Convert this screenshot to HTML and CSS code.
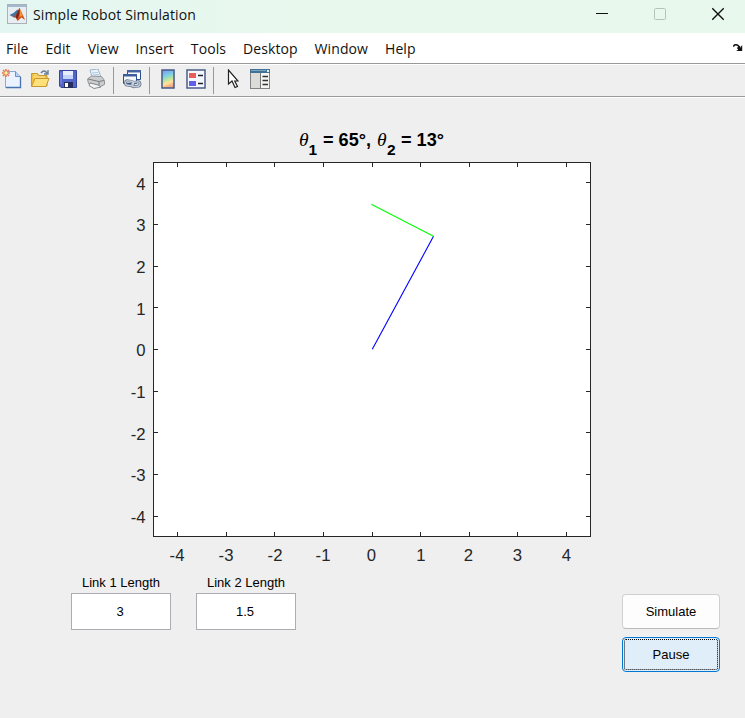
FILE: index.html
```html
<!DOCTYPE html>
<html lang="en">
<head>
<meta charset="utf-8">
<title>Simple Robot Simulation</title>
<link rel="stylesheet" href="styles.css">
</head>
<body>
<header class="titlebar">
  <svg class="app-icon" width="20" height="20" viewBox="0 0 20 20">
    <rect x=".5" y=".5" width="19" height="19" fill="#e8edf1" stroke="#a9b2b8"/>
    <path d="M1 1h18v2H1z" fill="#9fb9cf"/>
    <path d="M2.500 11l4-2 4-3.500 1.500 3-4 5.500-2-1z" fill="#3f76a8"/>
    <path d="M6 13l4-4 2.500-5 2 4 3.500 8-3.500-2.500-4 3.500-2-4z" fill="#cf4d18"/>
    <path d="M12.500 4l.5 5-3 6-1.500-2 2-5z" fill="#74251c"/>
    <path d="M12.800 5l1.500 3 1.200 4-3 1z" fill="#f49531"/>
  </svg>
  <h1 class="window-title">Simple Robot Simulation</h1>
  <div class="window-controls">
    <svg width="12" height="14" viewBox="0 0 12 14"><path d="M0 6.500h12" stroke="#111"/></svg>
    <svg width="12" height="14" viewBox="0 0 12 14"><rect x=".5" y="1.500" width="11" height="11" rx="1" fill="none" stroke="#b5c5ba"/></svg>
    <svg width="12" height="14" viewBox="0 0 12 14"><path d="M.3 1.300l11.400 11.400M11.700 1.300L.3 12.700" stroke="#111" stroke-width="1.250"/></svg>
  </div>
</header>
<nav class="menubar">
  <span>File</span><span>Edit</span><span>View</span><span>Insert</span><span>Tools</span><span>Desktop</span><span>Window</span><span>Help</span>
  <svg class="dock" width="10" height="8" viewBox="0 0 10 8"><path d="M.3 2.600Q2-.3 4.500 1.200L7 3.400" fill="none" stroke="#111" stroke-width="1.500"/><path d="M9.200 1v6H3.200l2-1.600-1.300-1.300 1.700-1.500 1.800 1z" fill="#111"/></svg>
</nav>
<div class="toolbar">
  <svg class="tool new" width="20" height="20" viewBox="0 0 20 20">
    <path d="M3.500 2.500h10l5 5v11h-15z" fill="#eaf3ff" stroke="#8babd2"/>
    <path d="M13.500 2.500v5h5" fill="#b7d2f2" stroke="#6f91c1"/>
    <path d="M18.500 8v10.500H4" fill="none" stroke="#4673b0" stroke-width="1.300"/>
    <path d="M1 1l6 6M7 1L1 7M4 0v8M0 4h8" stroke="#e07a58" stroke-width="1.600"/><circle cx="4" cy="4" r="1.700" fill="#fff09a"/>
  </svg>
  <svg class="tool open" width="20" height="20" viewBox="0 0 20 20">
    <path d="M1.500 17V4.500h6l1.500 2h8V17z" fill="#f3bf3e" stroke="#c59a32"/>
    <path d="M3 8h12M4 6h3" stroke="#ffeb9d"/>
    <path d="M1.500 17.500L5 9.500h14L16 17.500z" fill="#ffe17b" stroke="#c8982c"/>
    <path d="M11 4q3-4 6 0M18 1v4h-4" fill="none" stroke="#657e98" stroke-width="1.400"/>
  </svg>
  <svg class="tool save" width="20" height="20" viewBox="0 0 20 20">
    <path d="M1.500 1.500h17v17H3l-1.500-1.500z" fill="#5365c8" stroke="#33459b"/>
    <path d="M5 2h10v8H5z" fill="#e7eeff"/><path d="M5 6h10v4H5z" fill="#c5d4fa"/>
    <path d="M6 13h9v6H6z" fill="#252d5c"/><path d="M7 14h3v4H7z" fill="#fff"/>
    <path d="M3 3v12" stroke="#8293e7"/>
  </svg>
  <svg class="tool print" width="20" height="20" viewBox="0 0 20 20">
    <path d="M6 8L4 1l8-1 3 8z" fill="#e8f3fc" stroke="#9fb4c6"/>
    <path d="M1.500 10l4-3 10 .5 3 4v4l-4 2-12-3z" fill="#cbcccd" stroke="#929496"/>
    <path d="M2 10l11 2.500 5-1M13 12.500v4" fill="none" stroke="#7b7e80"/>
    <path d="M4 14l8 2 3 2-7 1.500-5-3z" fill="#f5f5f5" stroke="#85888b"/>
    <path d="M6 4l6-.5M7 6l6-.5" stroke="#b0c8db"/>
  </svg>
  <i class="sep s1"></i>
  <svg class="tool link" width="20" height="20" viewBox="0 0 20 20">
    <path d="M5.500 1.500h13v9h-13z" fill="#fff" stroke="#2c508b"/><path d="M5 1h14v2.500H5z" fill="#43669f"/>
    <path d="M1.500 5.500h13v9h-13z" fill="#f4f7fc" stroke="#2c508b"/><path d="M1 5h14v2.500H1z" fill="#3b5d98"/>
    <g fill="none" stroke="#657488" stroke-width="2.800"><rect x="3.500" y="12" width="8" height="4.500" rx="2.250" transform="rotate(8 7.500 14)"/><rect x="10" y="13" width="8" height="4.500" rx="2.250" transform="rotate(-8 14 15)"/></g>
    <g fill="none" stroke="#c3cfdc" stroke-width="1.300"><rect x="3.500" y="12" width="8" height="4.500" rx="2.250" transform="rotate(8 7.500 14)"/><rect x="10" y="13" width="8" height="4.500" rx="2.250" transform="rotate(-8 14 15)"/></g>
  </svg>
  <i class="sep s2"></i>
  <svg class="tool colorbar" width="14" height="20" viewBox="0 0 14 20">
    <defs><linearGradient id="spectrum" x1="0" y1="0" x2=".25" y2="1"><stop stop-color="#8d8bea"/><stop offset=".35" stop-color="#76cce8"/><stop offset=".6" stop-color="#b8e5a0"/><stop offset=".8" stop-color="#ffe29a"/><stop offset="1" stop-color="#f4ab85"/></linearGradient></defs>
    <rect x="1" y="1" width="12" height="18" fill="url(#spectrum)" stroke="#445a86" stroke-width="1.500"/>
  </svg>
  <svg class="tool legend" width="20" height="20" viewBox="0 0 20 20">
    <rect x="1" y="1" width="18" height="18" fill="#f4f7ff" stroke="#4b5d8b" stroke-width="1.500"/>
    <path d="M3 4h7v5H3z" fill="#e85c59"/><path d="M3 12h7v5H3z" fill="#615fe6"/><path d="M12 6.500h5M12 14.500h5" stroke="#222" stroke-width="1.500"/>
  </svg>
  <i class="sep s3"></i>
  <svg class="tool pointer" width="12" height="20" viewBox="0 0 12 20">
    <path d="M1.500 1v14l3.500-3 3 6.500 2.500-1L7.700 12H11z" fill="#fff" stroke="#222" stroke-width="1.200"/>
  </svg>
  <svg class="tool inspector" width="20" height="20" viewBox="0 0 20 20">
    <rect x=".5" y=".5" width="19" height="19" fill="#dcdcd9" stroke="#808487"/>
    <path d="M0 0h20v4H0z" fill="#427194"/><path d="M1 1h15v1H1z" fill="#79a6c2"/><path d="M17 1h2v2h-2z" fill="#e4f1fa"/>
    <path d="M11 4h8v15h-8z" fill="#f5f5f2"/><path d="M10.500 4v15.500" stroke="#777"/><path d="M12.500 7.500H18M12.500 11.500H18M12.500 15.500H18" stroke="#333" stroke-width="1.300"/>
  </svg>
</div>
<main class="figure">
  <svg class="plot" width="745" height="470" viewBox="0 98 745 470">
    <g class="plot-title">
      <text class="theta" x="299" y="146">θ</text><text class="sub" x="308.500" y="155">1</text><text x="323" y="146">= 65°,</text>
      <text class="theta" x="377" y="146">θ</text><text class="sub" x="387" y="155">2</text><text x="401" y="146">= 13°</text>
    </g>
    <rect class="axes" x="153.500" y="162.500" width="437" height="374"/>
    <path class="ticks" d="M177.500 163v4m49-4v4m48-4v4m49-4v4m49-4v4m48-4v4m49-4v4m48-4v4m49-4v4M177.500 536v-4m49 4v-4m48 4v-4m49 4v-4m49 4v-4m48 4v-4m49 4v-4m48 4v-4m49 4v-4M154 182.500h4m-4 42h4m-4 42h4m-4 41h4m-4 42h4m-4 42h4m-4 41h4m-4 42h4m-4 42h4M590 182.500h-4m4 42h-4m4 42h-4m4 41h-4m4 42h-4m4 42h-4m4 41h-4m4 42h-4m4 42h-4"/>
    <g class="labels-y">
      <text x="145.500" y="189.500">4</text><text x="145.500" y="231">3</text><text x="145.500" y="273">2</text><text x="145.500" y="314.500">1</text><text x="145.500" y="356">0</text><text x="145.500" y="397.500">-1</text><text x="145.500" y="439.500">-2</text><text x="145.500" y="481">-3</text><text x="145.500" y="522.500">-4</text>
    </g>
    <g class="labels-x">
      <text x="177" y="561">-4</text><text x="226" y="561">-3</text><text x="275" y="561">-2</text><text x="323" y="561">-1</text><text x="371.500" y="561">0</text><text x="421" y="561">1</text><text x="468.500" y="561">2</text><text x="517.500" y="561">3</text><text x="566.500" y="561">4</text>
    </g>
    <path class="link1" d="M372.300 349.300L433.500 236.300"/>
    <path class="link2" d="M371.300 204.200L433.500 236.200"/>
  </svg>
  <div class="controls">
    <label class="field">Link 1 Length<input type="text" value="3"></label>
    <label class="field">Link 2 Length<input type="text" value="1.5"></label>
    <div class="buttons">
      <button type="button">Simulate</button>
      <button type="button" class="active">Pause</button>
    </div>
  </div>
</main>
</body>
</html>
```
FILE: styles.css
```css
* { box-sizing: border-box; }
body {
  margin: 0;
  width: 745px;
  height: 718px;
  overflow: hidden;
  background: #efefef;
  color: #111;
  font-family: "Open Sans", "Noto Sans", sans-serif;
}
svg { display: block; flex: none; }
.titlebar {
  display: flex;
  height: 33px;
  padding: 4px 21px 0 7px;
  background: linear-gradient(90deg, #e3f6f1, #e8f8ed 40%);
}
.window-title {
  margin: 0 0 0 6px;
  font-size: 14px;
  font-weight: 400;
  line-height: 22px;
  letter-spacing: 0.13px;
}
.window-controls {
  display: flex;
  gap: 46px;
  margin: 3px 0 0 auto;
}
.window-controls svg:first-child { margin-right: 0; }
.menubar {
  display: flex;
  gap: 17px;
  height: 32px;
  padding: 0 2px 0 6px;
  background: #fff;
  border-bottom: 1px solid #fff;
  box-shadow: inset 0 -1px #999;
  font-size: 14px;
  letter-spacing: 0.08px;
  line-height: 31px;
}
.dock { margin: 11px 0 0 auto; }
.toolbar {
  display: flex;
  height: 33px;
  padding: 4px 0 0 2px;
  border-bottom: 1px solid #fff;
  box-shadow: inset 0 -1px #999;
}
.open { margin-left: 8px; }
.save { margin-left: 8px; }
.print { margin-left: 8px; }
.sep { width: 1px; height: 27px; margin-top: -2px; background: #999; }
.s1 { margin-left: 7px; }
.link { margin-left: 8px; }
.s2 { margin-left: 7px; }
.colorbar { margin-left: 11px; }
.legend { margin-left: 11px; }
.s3 { margin-left: 7px; }
.pointer { margin-left: 13px; }
.inspector { margin-left: 11px; }
.figure { font-family: "Liberation Sans", Arial, sans-serif; }
.axes { fill: #fff; stroke: #262626; }
.ticks { fill: none; stroke: #262626; }
.labels-x, .labels-y { fill: #262626; font-size: 16.7px; }
.labels-x { text-anchor: middle; }
.labels-y { text-anchor: end; }
.plot-title { fill: #000; font-size: 18.1px; font-weight: 700; }
.theta { font-family: "Liberation Serif", serif; font-style: italic; font-weight: 400; font-size: 19.5px; }
.sub { font-size: 15.5px; }
.link1, .link2 { fill: none; stroke-width: 1.1; }
.link1 { stroke: #00f; }
.link2 { stroke: #0f0; }
.controls {
  display: flex;
  gap: 25px;
  padding: 7px 25px 0 71px;
}
.field {
  display: flex;
  flex-direction: column;
  gap: 2px;
  width: 100px;
  color: #000;
  font-size: 13px;
  line-height: 16px;
  text-align: center;
}
.field input {
  width: 100px;
  height: 37px;
  padding: 0 2px 1px 0;
  border: 1px solid #abadb3;
  background: #fff;
  color: #000;
  font: inherit;
  text-align: center;
}
.buttons {
  display: flex;
  flex-direction: column;
  gap: 8px;
  margin: 19px 0 0 auto;
}
.buttons button {
  width: 98px;
  height: 35px;
  padding: 0;
  border: 1px solid #d0d0d0;
  border-bottom-color: #bababa;
  border-radius: 4px;
  background: #fdfdfd;
  color: #000;
  font: 13px/16px "Liberation Sans", Arial, sans-serif;
}
.buttons .active {
  border-color: #0078d4;
  background: #e0eef9;
  outline: 1px dotted #000;
  outline-offset: -3px;
}
```
